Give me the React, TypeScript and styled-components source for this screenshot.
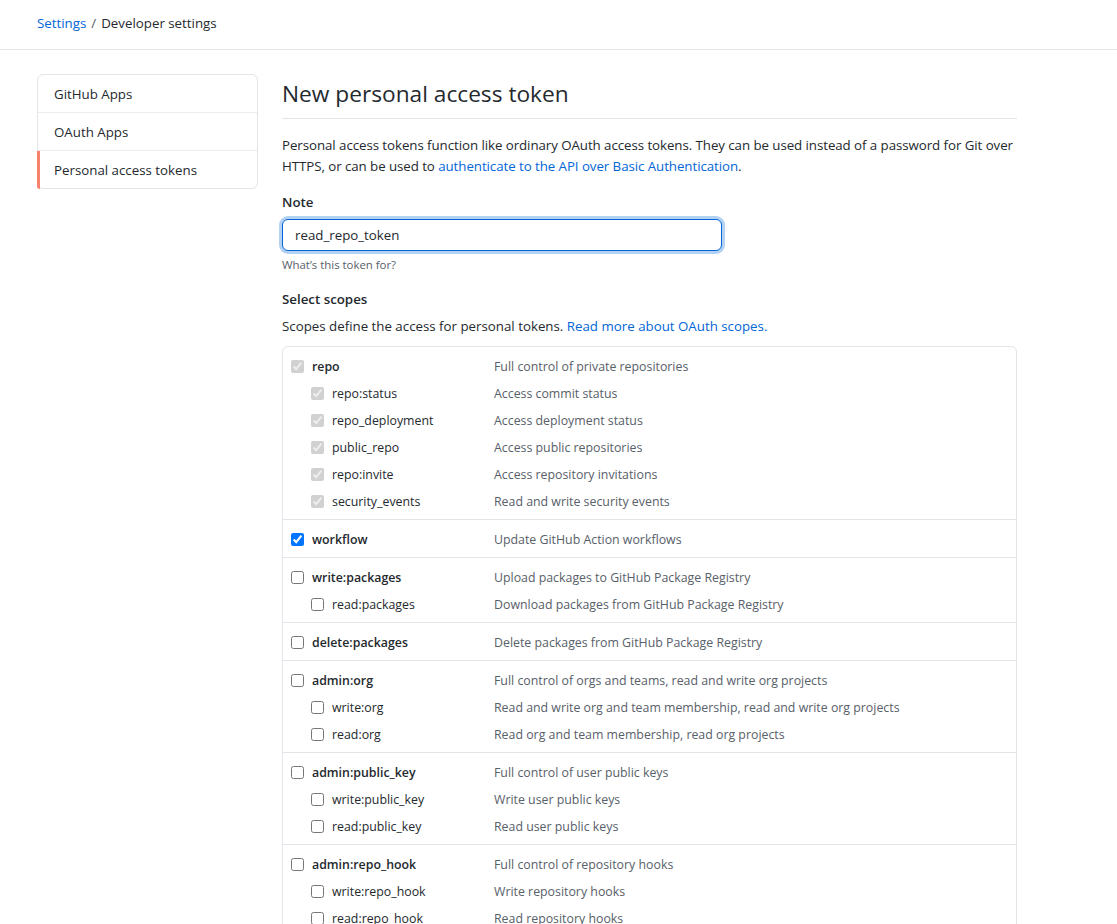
import styled, { createGlobalStyle } from "styled-components"

type Scope = {
    name: string
    desc: string
    checked?: boolean
    disabled?: boolean
    children?: Scope[]
}

const scopes: Scope[] = [
    {
        name: "repo", desc: "Full control of private repositories", checked: true, disabled: true,
        children: [
            { name: "repo:status", desc: "Access commit status", checked: true, disabled: true },
            { name: "repo_deployment", desc: "Access deployment status", checked: true, disabled: true },
            { name: "public_repo", desc: "Access public repositories", checked: true, disabled: true },
            { name: "repo:invite", desc: "Access repository invitations", checked: true, disabled: true },
            { name: "security_events", desc: "Read and write security events", checked: true, disabled: true },
        ],
    },
    { name: "workflow", desc: "Update GitHub Action workflows", checked: true },
    {
        name: "write:packages", desc: "Upload packages to GitHub Package Registry",
        children: [{ name: "read:packages", desc: "Download packages from GitHub Package Registry" }],
    },
    { name: "delete:packages", desc: "Delete packages from GitHub Package Registry" },
    {
        name: "admin:org", desc: "Full control of orgs and teams, read and write org projects",
        children: [
            { name: "write:org", desc: "Read and write org and team membership, read and write org projects" },
            { name: "read:org", desc: "Read org and team membership, read org projects" },
        ],
    },
    {
        name: "admin:public_key", desc: "Full control of user public keys",
        children: [
            { name: "write:public_key", desc: "Write user public keys" },
            { name: "read:public_key", desc: "Read user public keys" },
        ],
    },
    {
        name: "admin:repo_hook", desc: "Full control of repository hooks",
        children: [
            { name: "write:repo_hook", desc: "Write repository hooks" },
            { name: "read:repo_hook", desc: "Read repository hooks" },
        ],
    },
    { name: "admin:org_hook", desc: "Full control of organization hooks" },
]

const menu = ["GitHub Apps", "OAuth Apps", "Personal access tokens"]

function App() {
    return (
        <>
            <GlobalStyle />
            <Header>
                <Crumb href="#">Settings</Crumb>
                <Sep>/</Sep>
                <span>Developer settings</span>
            </Header>
            <Layout>
                <SideNav>
                    {menu.map((m, idx) => (
                        <NavItem key={m} $active={idx === menu.length - 1}>{m}</NavItem>
                    ))}
                </SideNav>
                <Main>
                    <Title>New personal access token</Title>
                    <Intro>
                        Personal access tokens function like ordinary OAuth access tokens. They can be used instead of a password for Git over HTTPS, or can be used to <Link href="#">authenticate to the API over Basic Authentication</Link>.
                    </Intro>
                    <Label htmlFor="note">Note</Label>
                    <Input id="note" defaultValue="read_repo_token" />
                    <Hint>What’s this token for?</Hint>
                    <Label as="div">Select scopes</Label>
                    <ScopeIntro>
                        Scopes define the access for personal tokens. <Link href="#">Read more about OAuth scopes.</Link>
                    </ScopeIntro>
                    <ScopeBox>
                        {scopes.map(s => (
                            <ScopeGroup key={s.name}>
                                <ScopeRow scope={s} top />
                                {s.children?.map(c => <ScopeRow key={c.name} scope={c} />)}
                            </ScopeGroup>
                        ))}
                    </ScopeBox>
                </Main>
            </Layout>
        </>
    )
}

function ScopeRow({ scope, top }: { scope: Scope, top?: boolean }) {
    return (
        <Row>
            <NameCell $child={!top}>
                <Check type="checkbox" defaultChecked={scope.checked} disabled={scope.disabled} />
                <Name $top={top}>{scope.name}</Name>
            </NameCell>
            <Desc>{scope.desc}</Desc>
        </Row>
    )
}

export default App


const GlobalStyle = createGlobalStyle`
    html, body {
        margin : 0;
        overflow : hidden;
    }
    body {
        font-family : "Open Sans", "Noto Sans", sans-serif;
        font-size : 13.3px;
        line-height : 21px;
        color : #24292e;
        background : #fff;
    }
`

const Header = styled.header`
    height : 50px;
    padding : 0 0 2px 37px;
    box-sizing : border-box;
    display : flex;
    align-items : center;
    border-bottom : 1px solid #e1e4e8;
`

const Crumb = styled.a`
    color : #0366d6;
    text-decoration : none;
`

const Sep = styled.span`
    margin : 0 5px;
    color : #586069;
`

const Layout = styled.div`
    display : flex;
    align-items : flex-start;
    gap : 24px;
    padding : 24px 0 0 37px;
`

const SideNav = styled.nav`
    width : 221px;
    flex-shrink : 0;
    box-sizing : border-box;
    border : 1px solid #e1e4e8;
    border-radius : 6px;
    display : flex;
    flex-direction : column;
`

const NavItem = styled.div<{ $active?: boolean }>`
    position : relative;
    padding : 9px 16px 7px;
    border-bottom : 1px solid #eaecef;
    &:last-child {
        border-bottom : 0;
    }
    ${p => p.$active && `
        &::before {
            content : "";
            position : absolute;
            left : -1px;
            top : 0;
            bottom : -1px;
            width : 3px;
            background : #f9826c;
            border-bottom-left-radius : 6px;
        }
    `}
`

const Main = styled.main`
    width : 735px;
    flex-shrink : 0;
`

const Title = styled.h2`
    margin : 0;
    font-size : 22.7px;
    font-weight : 400;
    line-height : 36px;
    padding : 2px 0 6px;
    border-bottom : 1px solid #e1e4e8;
`

const Intro = styled.p`
    margin : 16px 0 0;
    letter-spacing : -0.06px;
`

const Link = styled.a`
    color : #0366d6;
    text-decoration : none;
`

const Label = styled.label`
    display : block;
    margin-top : 15px;
    font-weight : 600;
`

const Input = styled.input`
    display : block;
    margin-top : 6px;
    width : 440px;
    height : 32px;
    box-sizing : border-box;
    padding : 5px 12px;
    font : inherit;
    color : #24292e;
    border : 1px solid #0366d6;
    border-radius : 6px;
    outline : none;
    box-shadow : 0 0 0 3px rgba(3, 102, 214, 0.3);
`

const Hint = styled.p`
    margin : 5px 0 0;
    font-size : 11.4px;
    line-height : 18px;
    color : #586069;
`

const ScopeIntro = styled.p`
    margin : 6px 0 9px;
`

const ScopeBox = styled.div`
    border : 1px solid #e1e4e8;
    border-radius : 6px;
`

const ScopeGroup = styled.div`
    padding : 5px 8px;
    border-bottom : 1px solid #e1e4e8;
    &:last-child {
        border-bottom : 0;
    }
`

const Row = styled.div`
    display : flex;
    align-items : center;
    height : 27px;
    box-sizing : border-box;
    padding-top : 2px;
    font-size : 12.35px;
`

const NameCell = styled.div<{ $child?: boolean }>`
    width : 203px;
    flex-shrink : 0;
    box-sizing : border-box;
    display : flex;
    align-items : center;
    padding-left : ${p => p.$child ? "20px" : "0"};
`

const Check = styled.input`
    width : 13px;
    height : 13px;
    margin : -1px 8px 0 0;
`

const Name = styled.span<{ $top?: boolean }>`
    font-weight : ${p => p.$top ? 600 : 400};
`

const Desc = styled.span`
    color : #586069;
`
